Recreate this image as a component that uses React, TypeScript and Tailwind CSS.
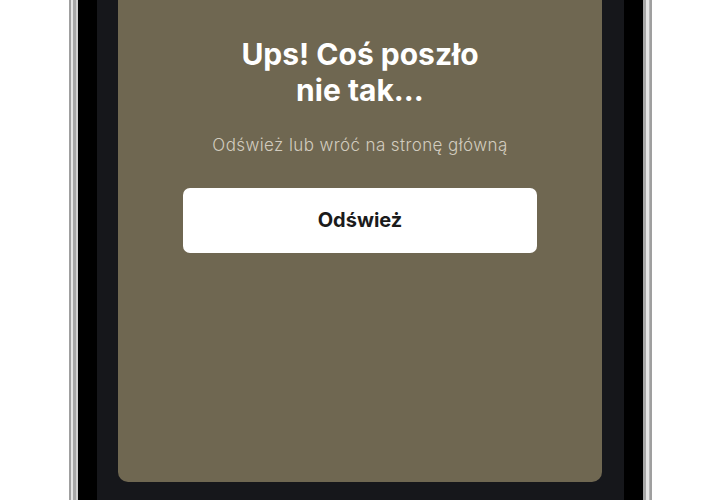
import React from 'react';

function Bezel({ side }: { side: 'left' | 'right' }) {
  // silver edge + black bezel, mirrored per side
  const strips =
    side === 'left'
      ? ['bg-[#9f9f9f] w-[2px]', 'bg-[#e4e4e4] w-[2px]', 'bg-[#a6a6a6] w-[3px]', 'bg-[#cfcfcf] w-[2px]', 'bg-black w-[19px]']
      : ['bg-black w-[19px]', 'bg-[#a6a6a6] w-[3px]', 'bg-[#e4e4e4] w-[3px]', 'bg-[#b5b5b5] w-[1px]', 'bg-[#9f9f9f] w-[2px]'];
  return (
    <div className="flex h-full">
      {strips.map((s, i) => (
        <div key={i} className={s + ' h-full'} />
      ))}
    </div>
  );
}

function App() {
  return (
    <div className="h-[500px] w-[720px] overflow-hidden bg-white font-['Inter','Noto_Sans',sans-serif]">
      <div className="ml-[69px] flex h-[520px] w-[583px]">
        <Bezel side="left" />
        <div className="flex-1 bg-[#16171b] pl-[21px] pr-[22px]">
          <div className="flex h-[482px] flex-col items-center rounded-b-[10px] bg-[#6f6751] pt-[36px]">
            <h1 className="text-center text-[30px] font-bold leading-[36px] text-white">
              Ups! Coś poszło
              <br />
              nie tak...
            </h1>
            <p className="mt-[25px] text-[17px] font-light tracking-[0.4px] text-[#d2ccbf]">
              Odśwież lub wróć na stronę główną
            </p>
            <button className="mt-[29px] h-[65px] w-[354px] rounded-[7px] bg-white text-[20px] font-bold text-[#1b1b1b]">
              Odśwież
            </button>
          </div>
        </div>
        <Bezel side="right" />
      </div>
    </div>
  );
}

export default App;
